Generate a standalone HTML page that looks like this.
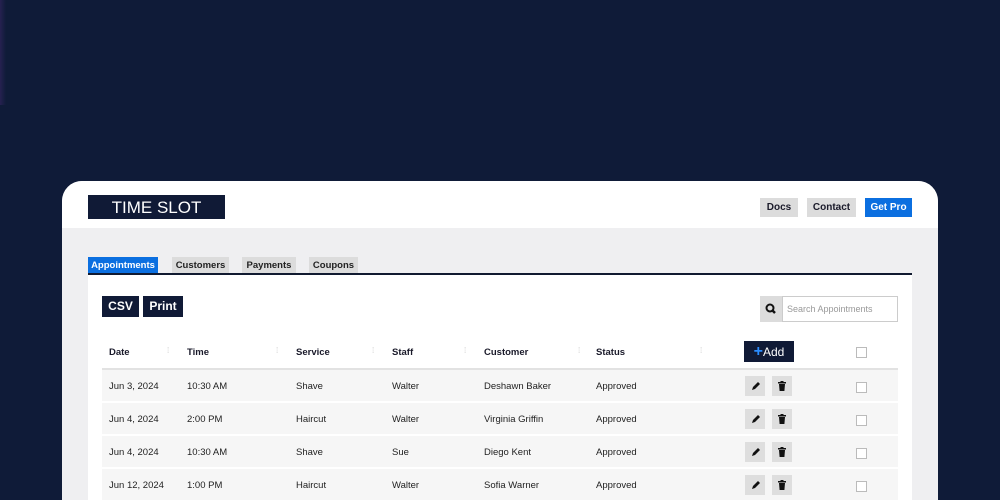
<!DOCTYPE html>
<html><head><style>
*{margin:0;padding:0;box-sizing:border-box}
html,body{width:1000px;height:500px;overflow:hidden}
body{background:#0f1b38;font-family:"Liberation Sans",sans-serif;position:relative}
.a{position:absolute}
.glow{left:-14px;top:0px;width:20px;height:105px;background:linear-gradient(to right,#5a2f8a,rgba(15,27,56,0))}
.card{left:62px;top:181px;width:876px;height:319px;background:#efeff1;border-radius:20px 20px 0 0;overflow:hidden}
.hdr{left:0;top:0;width:876px;height:47px;background:#fff}
.logo{left:26px;top:14px;width:137px;height:24px;background:#101a36;color:#fff;font-size:17px;text-align:center;line-height:25px}
.btn{height:19px;font-size:10px;font-weight:bold;line-height:19px;text-align:center;color:#1a1a2a;background:#dcdcdc}
.tab{top:76px;height:17px;font-size:9.5px;line-height:17px;text-align:center;background:#dcdcdc;color:#222;font-weight:bold}
.panel{left:26px;top:92px;width:824px;height:227px;background:#fff;border-top:2px solid #111a30}
.dk{background:#101a36;color:#fff;font-weight:bold;font-size:12px;text-align:center}
.th{top:166px;font-size:9.5px;font-weight:bold;color:#1a1a2a}
.sort{top:165px;font-size:8px;color:#ccc}
.row{left:40px;width:796px;height:31px;background:#f6f6f6;font-size:9.5px;color:#222}
.row span{position:absolute;top:11px}
.ib{width:20px;height:20px;background:#dedede;top:6px}
.cb{width:11px;height:11px;border:1px solid #bbb;background:#fff}
</style></head><body>
<div class="a glow"></div>
<div class="a card">
 <div class="a hdr"></div>
 <div class="a logo">TIME SLOT</div>
 <div class="a btn" style="left:698px;top:17px;width:38px">Docs</div>
 <div class="a btn" style="left:745px;top:17px;width:49px">Contact</div>
 <div class="a btn" style="left:803px;top:17px;width:47px;background:#0b6fe0;color:#fff">Get Pro</div>
 <div class="a tab" style="left:26px;width:70px;background:#0b6fe0;color:#fff">Appointments</div>
 <div class="a tab" style="left:110px;width:57px">Customers</div>
 <div class="a tab" style="left:180px;width:54px">Payments</div>
 <div class="a tab" style="left:247px;width:49px">Coupons</div>
 <div class="a panel"></div>
 <div class="a dk" style="left:40px;top:115px;width:37px;height:21px;line-height:21px">CSV</div>
 <div class="a dk" style="left:81px;top:115px;width:40px;height:21px;line-height:21px">Print</div>
 <div class="a" style="left:698px;top:115px;width:22px;height:26px;background:#dcdcdc"><svg width="22" height="26"><circle cx="10" cy="12" r="3.5" fill="none" stroke="#111" stroke-width="2"/><line x1="12.5" y1="14.5" x2="15" y2="17" stroke="#111" stroke-width="2.5"/></svg></div>
 <div class="a" style="left:720px;top:115px;width:116px;height:26px;border:1px solid #ccc;background:#fff;font-size:9px;color:#999;line-height:24px;padding-left:4px">Search Appointments</div>
 <div class="a th" style="left:47px">Date</div><div class="a sort" style="left:105px">⁞</div>
 <div class="a th" style="left:125px">Time</div><div class="a sort" style="left:214px">⁞</div>
 <div class="a th" style="left:234px">Service</div><div class="a sort" style="left:310px">⁞</div>
 <div class="a th" style="left:330px">Staff</div><div class="a sort" style="left:402px">⁞</div>
 <div class="a th" style="left:422px">Customer</div><div class="a sort" style="left:516px">⁞</div>
 <div class="a th" style="left:534px">Status</div><div class="a sort" style="left:638px">⁞</div>
 <div class="a dk" style="left:682px;top:160px;width:50px;height:21px;line-height:21px;font-weight:normal"><span style="color:#2a8cff;font-size:16px;font-weight:bold">+</span>Add</div>
 <div class="a cb" style="left:794px;top:166px"></div>
 <div class="a" style="left:40px;top:187px;width:796px;height:2px;background:#e2e2e2"></div>
 <div class="a row" style="top:189px"><span style="left:7px">Jun 3, 2024</span><span style="left:85px">10:30 AM</span><span style="left:194px">Shave</span><span style="left:290px">Walter</span><span style="left:382px">Deshawn Baker</span><span style="left:494px">Approved</span><div class="a ib" style="left:643px"><svg width="20" height="20"><path d="M7 14l1-3 5-5 2 2-5 5z" fill="#111"/></svg></div><div class="a ib" style="left:670px"><svg width="20" height="20"><rect x="6" y="6" width="8" height="1.5" fill="#111"/><rect x="8.5" y="5" width="3" height="1.5" fill="#111"/><path d="M7 8h6l-.6 7h-4.8z" fill="#111"/></svg></div><div class="a cb" style="left:754px;top:12px"></div></div>
 <div class="a row" style="top:222px"><span style="left:7px">Jun 4, 2024</span><span style="left:85px">2:00 PM</span><span style="left:194px">Haircut</span><span style="left:290px">Walter</span><span style="left:382px">Virginia Griffin</span><span style="left:494px">Approved</span><div class="a ib" style="left:643px"><svg width="20" height="20"><path d="M7 14l1-3 5-5 2 2-5 5z" fill="#111"/></svg></div><div class="a ib" style="left:670px"><svg width="20" height="20"><rect x="6" y="6" width="8" height="1.5" fill="#111"/><rect x="8.5" y="5" width="3" height="1.5" fill="#111"/><path d="M7 8h6l-.6 7h-4.8z" fill="#111"/></svg></div><div class="a cb" style="left:754px;top:12px"></div></div>
 <div class="a row" style="top:255px"><span style="left:7px">Jun 4, 2024</span><span style="left:85px">10:30 AM</span><span style="left:194px">Shave</span><span style="left:290px">Sue</span><span style="left:382px">Diego Kent</span><span style="left:494px">Approved</span><div class="a ib" style="left:643px"><svg width="20" height="20"><path d="M7 14l1-3 5-5 2 2-5 5z" fill="#111"/></svg></div><div class="a ib" style="left:670px"><svg width="20" height="20"><rect x="6" y="6" width="8" height="1.5" fill="#111"/><rect x="8.5" y="5" width="3" height="1.5" fill="#111"/><path d="M7 8h6l-.6 7h-4.8z" fill="#111"/></svg></div><div class="a cb" style="left:754px;top:12px"></div></div>
 <div class="a row" style="top:288px"><span style="left:7px">Jun 12, 2024</span><span style="left:85px">1:00 PM</span><span style="left:194px">Haircut</span><span style="left:290px">Walter</span><span style="left:382px">Sofia Warner</span><span style="left:494px">Approved</span><div class="a ib" style="left:643px"><svg width="20" height="20"><path d="M7 14l1-3 5-5 2 2-5 5z" fill="#111"/></svg></div><div class="a ib" style="left:670px"><svg width="20" height="20"><rect x="6" y="6" width="8" height="1.5" fill="#111"/><rect x="8.5" y="5" width="3" height="1.5" fill="#111"/><path d="M7 8h6l-.6 7h-4.8z" fill="#111"/></svg></div><div class="a cb" style="left:754px;top:12px"></div></div>
</div>
</body></html>
